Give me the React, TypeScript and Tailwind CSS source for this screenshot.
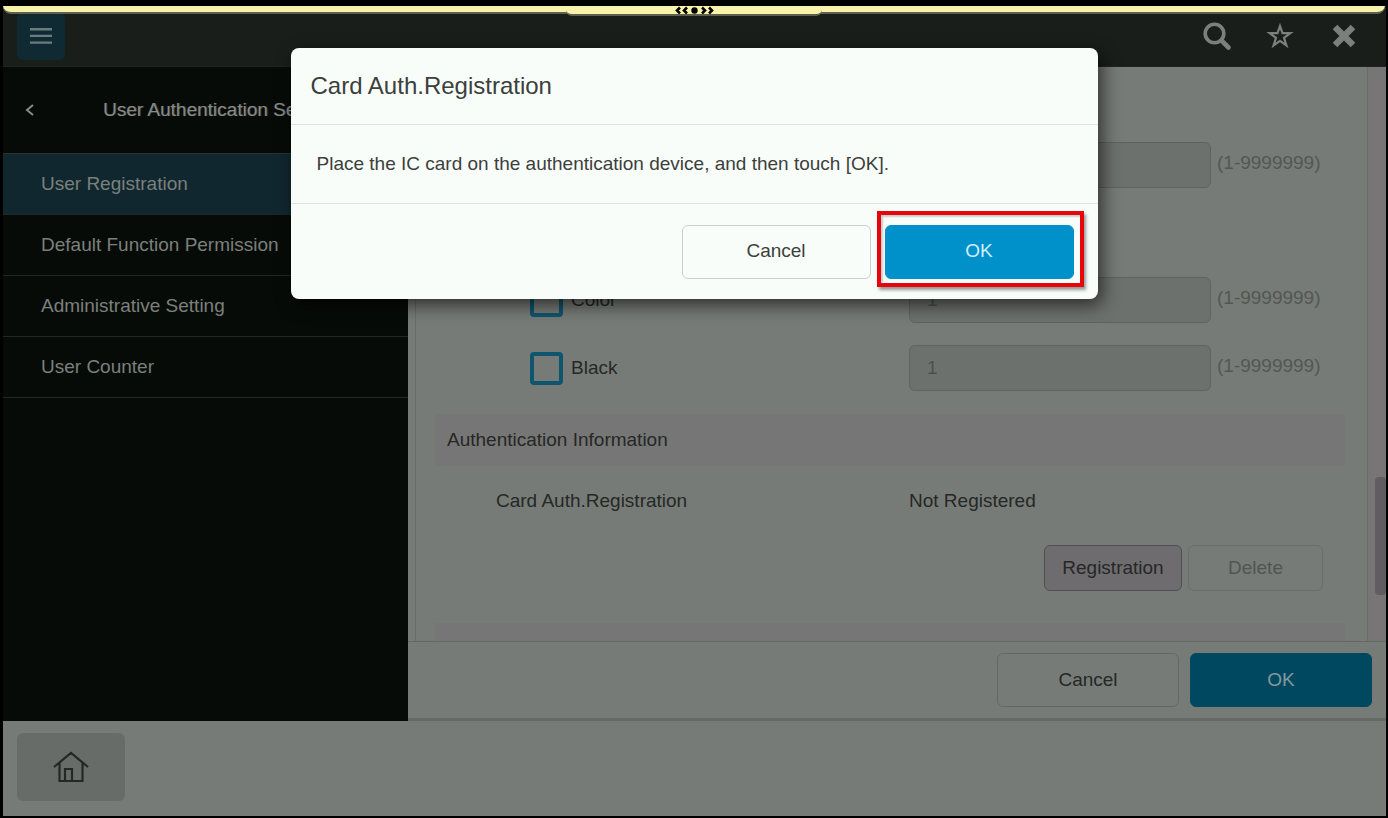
import type { ReactNode } from "react";

const sideItems = ["User Registration", "Default Function Permission", "Administrative Setting", "User Counter"];

function EdgeBar() {
  return (
    <div className="absolute inset-x-[3px] top-[6px] z-20 flex flex-col items-center">
      <div className="h-2 w-full rounded-b-lg border-b-2 border-[#5f604c] bg-[#f8f3ac]" />
      <div className="-mt-2 flex h-[10px] w-[256px] justify-center rounded-b-md border-b-2 border-[#5f604c] bg-[#f8f3ac]">
        <svg width="40" height="8" viewBox="0 0 40 8" fill="none" stroke="#000" strokeWidth="2.600" aria-hidden="true">
          <path d="M6 1.500 3 4.500 6 7.500M13 1.500 10 4.500 13 7.500M28 1.500l3 3-3 3M35 1.500l3 3-3 3" />
          <circle cx="20.500" cy="4.500" r="1.900" fill="#000" />
        </svg>
      </div>
    </div>
  );
}

function Header() {
  return (
    <header className="flex h-[61px] shrink-0 items-center border-b border-[#1f2421] text-[#7b807b] bg-[#1a1e1b]">
      <button type="button" aria-label="Menu" className="ml-[14px] flex h-[47px] w-12 items-center justify-center rounded-md bg-[#102a33] text-[#6b7c7c]">
        <svg width="22" height="18" viewBox="0 0 22 18" fill="currentColor" aria-hidden="true">
          <path d="M0 1h22v2.400H0zM0 7.700h22v2.400H0zM0 14.400h22v2.400H0z" />
        </svg>
      </button>
      <div className="ml-auto flex items-center gap-[34px] pr-[30px]">
        <button type="button" aria-label="Search">
          <svg width="30" height="30" viewBox="0 0 30 30" fill="none" stroke="currentColor" aria-hidden="true">
            <circle cx="12.500" cy="12.500" r="9.300" strokeWidth="3.600" />
            <path d="M19.500 19.500l7 7" strokeWidth="4.600" strokeLinecap="round" />
          </svg>
        </button>
        <button type="button" aria-label="Favorites">
          <svg width="28" height="28" viewBox="0 0 28 28" fill="none" stroke="currentColor" strokeWidth="2.200" aria-hidden="true">
            <path d="M14 4 16.500 11.200H24.300L18 15.900 20.400 23.400 14 18.800 7.600 23.400 10 15.900 3.700 11.200h7.800z" />
          </svg>
        </button>
        <button type="button" aria-label="Close" className="ml-1">
          <svg width="24" height="24" viewBox="0 0 24 24" stroke="currentColor" strokeWidth="6.500" aria-hidden="true">
            <path d="M3 3l18 18M21 3 3 21" />
          </svg>
        </button>
      </div>
    </header>
  );
}

function Sidebar() {
  return (
    <nav className="w-[405px] shrink-0 bg-[#070b07]">
      <div className="flex h-[87px] items-center border-b border-[#2c322f] text-[#878a87]">
        <button type="button" aria-label="Back" className="ml-5 flex h-8 w-4 items-center">
          <svg width="14" height="14" viewBox="0 0 14 14" fill="none" stroke="currentColor" strokeWidth="2" aria-hidden="true">
            <path d="M10 2 4 7l6 5" />
          </svg>
        </button>
        <h1 className="ml-16 whitespace-nowrap text-[19px] [text-shadow:1px_0_#878a8766]">User Authentication Setting</h1>
      </div>
      <ul className="text-[19px] text-[#7b807c]">
        {sideItems.map((item, i) => (
          <li key={item}>
            <a
              href="#"
              aria-current={i === 0 ? "page" : undefined}
              className="flex h-[61px] items-center border-b border-[#222724] pl-[38px] aria-[current=page]:bg-[#10272f]"
            >
              {item}
            </a>
          </li>
        ))}
      </ul>
    </nav>
  );
}

function LimitField({ label, value }: { label: string; value: string }) {
  return (
    <div className="flex items-center gap-[6px] text-[#535753]">
      <input
        type="text"
        disabled
        aria-label={label}
        defaultValue={value}
        className="h-[46px] w-[302px] rounded-md border border-[#5f6360] bg-[#6d716d] px-[17px] text-[19px] text-[#4c504c]"
      />
      <span className="w-[106px] pb-1 text-[19px]">(1-9999999)</span>
    </div>
  );
}

function LimitRow({ label, value }: { label: string; value: string }) {
  return (
    <div className="flex h-[68px] items-center justify-between pl-[95px] pr-[22px]">
      <label className="flex items-center gap-2 text-[19px]">
        <input type="checkbox" className="h-[33px] w-[33px] appearance-none rounded border-4 border-[#0f556d]" />
        {label}
      </label>
      <LimitField label={`${label} limit`} value={value} />
    </div>
  );
}

function OutlineButton({ children, className }: { children: ReactNode; className: string }) {
  return (
    <button type="button" className={`rounded-md border text-[19px] ${className}`}>
      {children}
    </button>
  );
}

function Content() {
  return (
    <div className="flex min-w-0 flex-1 flex-col bg-[#777b77] text-[#252825]">
      <div className="flex flex-1 pl-[7px]">
        <div className="flex flex-1 flex-col border-x border-[#696e6a] pl-[19px] pr-[22px] pt-16">
          <div className="flex h-[68px] items-center justify-end pr-[22px]">
            <LimitField label="Total limit" value="" />
          </div>
          <div className="h-[67px]" />
          <LimitRow label="Color" value="1" />
          <LimitRow label="Black" value="1" />
          <h2 className="mt-3 flex h-[52px] items-center bg-[#777676] pl-3 text-[19px]">Authentication Information</h2>
          <div className="flex h-[70px] items-center pl-[61px] pr-[22px] text-[19px]">
            <span className="flex-1">Card Auth.Registration</span>
            <span className="w-[414px]">Not Registered</span>
          </div>
          <div className="mt-[9px] flex justify-end gap-[6px] pr-[22px]">
            <OutlineButton className="h-[46px] w-[138px] border-[#504e50] bg-[#6f6c6f]">Registration</OutlineButton>
            <OutlineButton className="h-[46px] w-[135px] border-[#6a6e6a] text-[#515551]">Delete</OutlineButton>
          </div>
          <div className="mt-8 min-h-4 flex-1 bg-[#777676]" />
        </div>
        <div className="flex w-[18px] justify-end bg-[#777576] pt-[410px]">
          <div className="h-[118px] w-[11px] rounded bg-[#5f5d5f]" />
        </div>
      </div>
      <div className="flex h-[80px] items-center justify-end gap-[11px] border-b-[3px] border-t border-b-[#656a66] border-t-[#636864] pr-[14px]">
        <OutlineButton className="h-[54px] w-[182px] border-[#646864]">Cancel</OutlineButton>
        <OutlineButton className="h-[54px] w-[182px] border-[#00485f] bg-[#00485f] text-[#829a9f]">OK</OutlineButton>
      </div>
    </div>
  );
}

function Dialog() {
  return (
    <div className="absolute inset-x-0 top-12 z-10 flex justify-center px-4">
      <div
        role="dialog"
        aria-labelledby="dialog-title"
        className="w-[807px] rounded-lg bg-[#f9fdf9] text-[#3c3f3c] shadow-[4px_6px_18px_#000000a0]"
      >
        <h2 id="dialog-title" className="flex h-[77px] items-center border-b border-[#e0e4e1] px-5 text-[24px]">
          Card Auth.Registration
        </h2>
        <p className="flex h-[79px] items-center border-b border-[#e0e4e1] px-[26px] text-[19px]">
          Place the IC card on the authentication device, and then touch [OK].
        </p>
        <div className="flex h-[95px] items-center justify-end gap-[14px] pr-6">
          <OutlineButton className="h-[54px] w-[189px] border-[#cbcfcc]">Cancel</OutlineButton>
          <div className="relative flex">
            <OutlineButton className="h-[54px] w-[189px] border-[#0090ca] bg-[#0090ca] text-[#d0f0fb]">OK</OutlineButton>
            <div className="pointer-events-none absolute -bottom-2 -left-2 -right-[10px] -top-[14px] border-4 border-[#e6050a] shadow-[2px_3px_3px_#00000066,inset_2px_2px_2px_#00000033]" />
          </div>
        </div>
      </div>
    </div>
  );
}

export default function App() {
  return (
    <div className="relative flex min-h-screen flex-col bg-black pb-[2px] pl-[3px] pr-[2px] pt-[6px] font-['Liberation_Sans',Arial,sans-serif]">
      <EdgeBar />
      <Header />
      <div className="flex flex-1">
        <Sidebar />
        <Content />
      </div>
      <footer className="flex h-[95px] shrink-0 items-center bg-[#777b77] pb-1 pl-[14px]">
        <button type="button" aria-label="Home" className="flex h-[68px] w-[108px] items-center justify-center rounded-md bg-[#686c68] text-[#242824]">
          <svg width="38" height="34" viewBox="0 0 38 34" fill="none" stroke="currentColor" strokeWidth="2.200" aria-hidden="true">
            <path d="M2 17 19 3l17 14M7.500 13v18h23V13M13 31V19h7v12" />
          </svg>
        </button>
      </footer>
      <Dialog />
    </div>
  );
}
